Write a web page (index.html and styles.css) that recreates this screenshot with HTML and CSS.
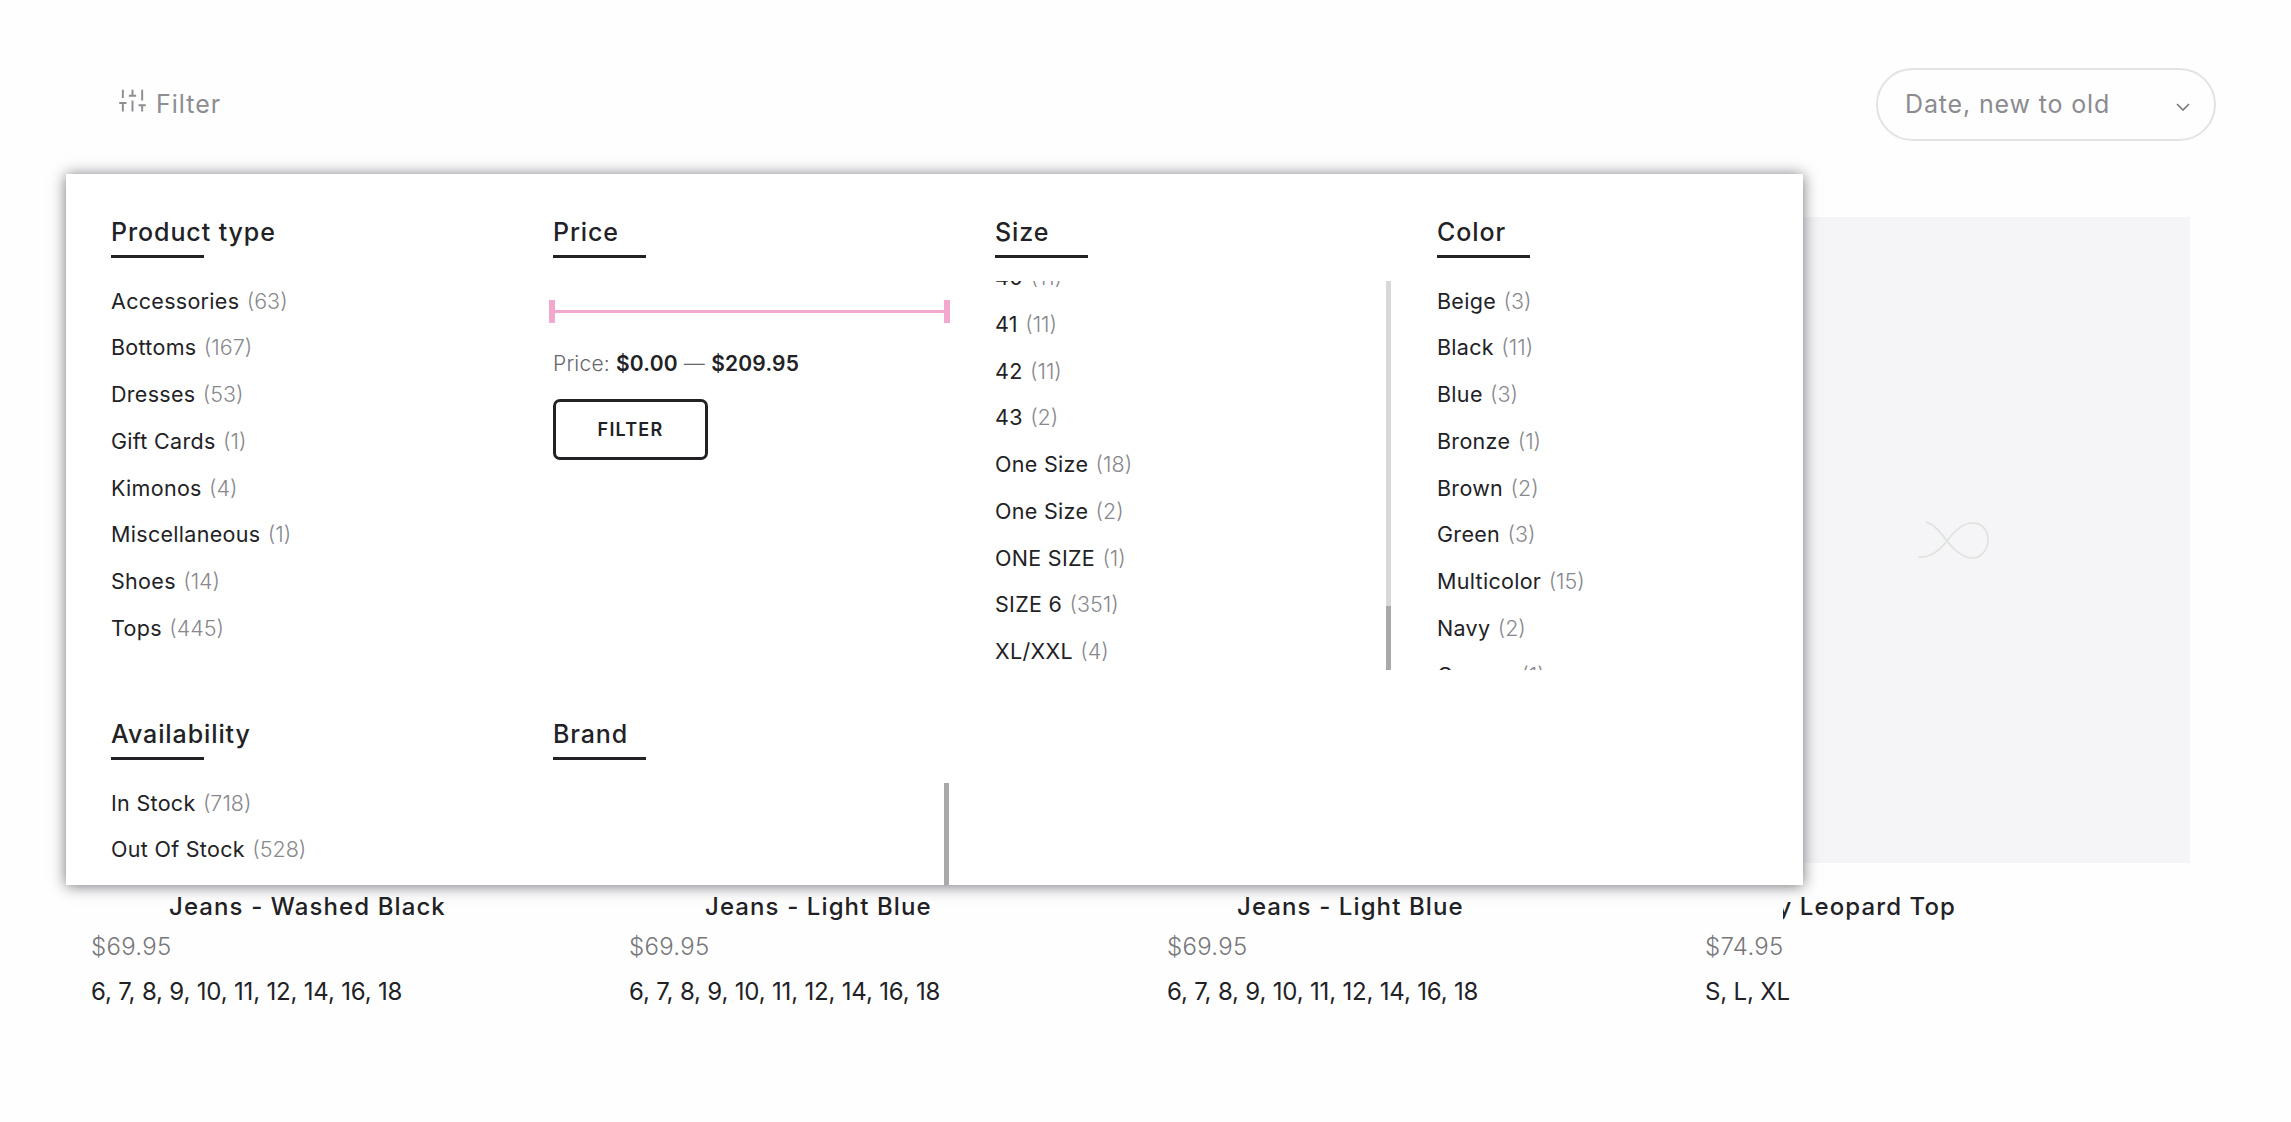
FILE: index.html
```html
<!DOCTYPE html>
<html lang="en">
<head>
    <meta charset="UTF-8">
    <meta name="viewport" content="width=device-width, initial-scale=1.0">
    <title>Collection</title>
    <link rel="stylesheet" href="styles.css">
</head>
<body>
    <div class="page">
        <div class="toolbar">
            <button class="filter-toggle">
                <svg class="filter-icon" viewBox="0 0 24 24" fill="none" stroke="currentColor" stroke-width="1.6">
                    <path d="M4 21v-7M4 10V3M12 21v-9M12 8V3M20 21v-5M20 12V3M1 14h6M9 8h6M17 16h6"/>
                </svg>
                Filter
            </button>
            <div class="sort-select">
                <span>Date, new to old</span>
                <svg class="sort-arrow" viewBox="0 0 14 8" fill="none" stroke="currentColor" stroke-width="1.6">
                    <path d="M1 1l6 6 6-6"/>
                </svg>
            </div>
        </div>

        <div class="product-grid">
            <div class="product-card">
                <div class="product-image">
                    <svg class="placeholder-icon" viewBox="0 0 72 38" fill="none" stroke="currentColor" stroke-width="1.6">
                        <path d="M1 36C12 37 20 32 30 20C38 9 46 2 55 2C66 2 71 10 71 19C71 29 64 37 55 37C46 37 38 30 30 20C24 12 18 4 9 1"/>
                    </svg>
                </div>
                <div class="product-title">Jeans - Washed Black</div>
                <div class="product-price">$69.95</div>
                <div class="product-sizes">6, 7, 8, 9, 10, 11, 12, 14, 16, 18</div>
            </div>
            <div class="product-card">
                <div class="product-image">
                    <svg class="placeholder-icon" viewBox="0 0 72 38" fill="none" stroke="currentColor" stroke-width="1.6">
                        <path d="M1 36C12 37 20 32 30 20C38 9 46 2 55 2C66 2 71 10 71 19C71 29 64 37 55 37C46 37 38 30 30 20C24 12 18 4 9 1"/>
                    </svg>
                </div>
                <div class="product-title">Jeans - Light Blue</div>
                <div class="product-price">$69.95</div>
                <div class="product-sizes">6, 7, 8, 9, 10, 11, 12, 14, 16, 18</div>
            </div>
            <div class="product-card">
                <div class="product-image">
                    <svg class="placeholder-icon" viewBox="0 0 72 38" fill="none" stroke="currentColor" stroke-width="1.6">
                        <path d="M1 36C12 37 20 32 30 20C38 9 46 2 55 2C66 2 71 10 71 19C71 29 64 37 55 37C46 37 38 30 30 20C24 12 18 4 9 1"/>
                    </svg>
                </div>
                <div class="product-title">Jeans - Light Blue</div>
                <div class="product-price">$69.95</div>
                <div class="product-sizes">6, 7, 8, 9, 10, 11, 12, 14, 16, 18</div>
            </div>
            <div class="product-card">
                <div class="product-image">
                    <svg class="placeholder-icon" viewBox="0 0 72 38" fill="none" stroke="currentColor" stroke-width="1.6">
                        <path d="M1 36C12 37 20 32 30 20C38 9 46 2 55 2C66 2 71 10 71 19C71 29 64 37 55 37C46 37 38 30 30 20C24 12 18 4 9 1"/>
                    </svg>
                </div>
                <div class="product-title"><span>y Leopard Top</span></div>
                <div class="product-price">$74.95</div>
                <div class="product-sizes">S, L, XL</div>
            </div>
        </div>

        <!-- Filter dropdown, lies over the grid -->
        <div class="filter-panel">
            <section class="filter-section">
                <h3 class="filter-heading">Product type</h3>
                <div class="filter-scroll">
                    <ul class="filter-list">
                        <li>Accessories <span class="count">(63)</span></li>
                        <li>Bottoms <span class="count">(167)</span></li>
                        <li>Dresses <span class="count">(53)</span></li>
                        <li>Gift Cards <span class="count">(1)</span></li>
                        <li>Kimonos <span class="count">(4)</span></li>
                        <li>Miscellaneous <span class="count">(1)</span></li>
                        <li>Shoes <span class="count">(14)</span></li>
                        <li>Tops <span class="count">(445)</span></li>
                    </ul>
                </div>
            </section>

            <section class="filter-section">
                <h3 class="filter-heading">Price</h3>
                <div class="price-slider">
                    <span class="slider-handle"></span>
                    <span class="slider-line"></span>
                    <span class="slider-handle"></span>
                </div>
                <div class="price-label">Price: <strong>$0.00</strong> — <strong>$209.95</strong></div>
                <button class="price-btn">FILTER</button>
            </section>

            <section class="filter-section">
                <h3 class="filter-heading">Size</h3>
                <div class="filter-scroll">
                    <ul class="filter-list filter-list-scrolled">
                        <li>40 <span class="count">(11)</span></li>
                        <li>41 <span class="count">(11)</span></li>
                        <li>42 <span class="count">(11)</span></li>
                        <li>43 <span class="count">(2)</span></li>
                        <li>One Size <span class="count">(18)</span></li>
                        <li>One Size <span class="count">(2)</span></li>
                        <li>ONE SIZE <span class="count">(1)</span></li>
                        <li>SIZE 6 <span class="count">(351)</span></li>
                        <li>XL/XXL <span class="count">(4)</span></li>
                    </ul>
                    <div class="scroll-track"><div class="scroll-thumb"></div></div>
                </div>
            </section>

            <section class="filter-section">
                <h3 class="filter-heading">Color</h3>
                <div class="filter-scroll">
                    <ul class="filter-list">
                        <li>Beige <span class="count">(3)</span></li>
                        <li>Black <span class="count">(11)</span></li>
                        <li>Blue <span class="count">(3)</span></li>
                        <li>Bronze <span class="count">(1)</span></li>
                        <li>Brown <span class="count">(2)</span></li>
                        <li>Green <span class="count">(3)</span></li>
                        <li>Multicolor <span class="count">(15)</span></li>
                        <li>Navy <span class="count">(2)</span></li>
                        <li>Orange <span class="count">(1)</span></li>
                    </ul>
                </div>
            </section>

            <section class="filter-section">
                <h3 class="filter-heading">Availability</h3>
                <div class="filter-scroll">
                    <ul class="filter-list">
                        <li>In Stock <span class="count">(718)</span></li>
                        <li>Out Of Stock <span class="count">(528)</span></li>
                    </ul>
                </div>
            </section>

            <section class="filter-section">
                <h3 class="filter-heading">Brand</h3>
                <div class="filter-scroll">
                    <div class="scroll-track scroll-track-full"></div>
                </div>
            </section>
        </div>
    </div>
</body>
</html>
```

FILE: styles.css
```css
* {
    margin: 0;
    padding: 0;
    box-sizing: border-box;
}

body {
    font-family: Inter, 'Open Sans', 'Liberation Sans', sans-serif;
    background: #fefefe;
    color: #222226;
}

.page {
    position: relative;
    padding: 68px 101px 0 91px;
}

.toolbar {
    display: flex;
    justify-content: space-between;
    align-items: center;
    margin: 0 -26px 0 27px;
}

.filter-toggle {
    display: flex;
    align-items: center;
    gap: 9px;
    padding-bottom: 1px;
    border: none;
    background: none;
    font-family: inherit;
    font-size: 25px;
    letter-spacing: 1px;
    color: #8d8d92;
}

.filter-icon {
    width: 29px;
    height: 29px;
    margin-top: -7px;
}

.sort-select {
    display: flex;
    justify-content: space-between;
    align-items: center;
    width: 340px;
    height: 73px;
    padding: 0 24px 2px 27px;
    border: 2px solid #e3e3e6;
    border-radius: 37px;
    font-size: 25px;
    letter-spacing: 0.85px;
    color: #8b8b90;
}

.sort-arrow {
    width: 14px;
    height: 8px;
    margin-top: 6px;
    color: #77777c;
}

.product-grid {
    display: grid;
    grid-template-columns: repeat(4, 485px);
    column-gap: 53px;
    margin-top: 76px;
}

.product-image {
    display: flex;
    justify-content: center;
    align-items: center;
    height: 646px;
    background: #f5f5f7;
}

.placeholder-icon {
    width: 72px;
    height: 38px;
    margin-left: 10px;
    color: #dde2dd;
}

.product-title {
    margin-top: 29px;
    font-size: 24px;
    line-height: 30px;
    font-weight: 500;
    letter-spacing: 1.1px;
    white-space: nowrap;
}

.product-card:nth-child(1) .product-title {
    padding-left: 78px;
}

.product-card:nth-child(2) .product-title {
    padding-left: 76px;
}

.product-card:nth-child(3) .product-title {
    padding-left: 70px;
}

/* title is cut on the left in this card */
.product-card:nth-child(4) .product-title {
    display: flex;
    justify-content: flex-end;
    width: 173px;
    margin-left: 78px;
    overflow: hidden;
}

.product-price {
    margin-top: 10px;
    font-size: 24px;
    line-height: 30px;
    font-weight: 300;
    letter-spacing: 0.3px;
    color: #77777c;
}

.product-sizes {
    margin-top: 15px;
    font-size: 24px;
    line-height: 30px;
    letter-spacing: -0.18px;
    white-space: nowrap;
}

.filter-panel {
    position: absolute;
    top: 174px;
    left: 66px;
    display: grid;
    grid-template-columns: repeat(4, 396px);
    column-gap: 46px;
    row-gap: 48px;
    align-content: start;
    width: 1737px;
    height: 711px;
    padding: 42px 0 0 45px;
    background: #fff;
    box-shadow: 0 1px 14px rgba(40, 40, 50, 0.65);
    overflow: hidden;
}

.filter-section {
    height: 454px;
}

.filter-heading {
    width: 93px;
    height: 42px;
    border-bottom: 3px solid #222226;
    font-size: 25px;
    line-height: 33px;
    font-weight: 500;
    letter-spacing: 0.9px;
    white-space: nowrap;
}

.filter-scroll {
    position: relative;
    height: 389px;
    margin-top: 23px;
    overflow: hidden;
}

.filter-list {
    list-style: none;
    margin-top: -3.5px;
}

.filter-list-scrolled {
    margin-top: -27px;
}

.filter-list li {
    height: 46.75px;
    font-size: 21.5px;
    line-height: 46.75px;
    letter-spacing: 0.3px;
    white-space: nowrap;
}

.count {
    margin-left: 1px;
    font-weight: 300;
    letter-spacing: 0;
    color: #88888d;
}

.scroll-track {
    position: absolute;
    top: 0;
    right: 0;
    width: 5px;
    height: 100%;
    background: #d8d8da;
}

.scroll-thumb {
    position: absolute;
    bottom: 0;
    left: 0;
    width: 100%;
    height: 64px;
    background: #a9a9a9;
}

.scroll-track-full {
    background: #a9a9a9;
}

.price-slider {
    display: flex;
    align-items: center;
    width: 401px;
    margin: 42px 0 0 -4px;
}

.slider-handle {
    width: 6px;
    height: 23px;
    background: #f2a9cd;
}

.slider-line {
    flex: 1;
    height: 3px;
    background: #f2a9cd;
}

.price-label {
    margin-top: 24px;
    font-size: 21px;
    line-height: 34px;
    font-weight: 300;
    letter-spacing: 0.2px;
    color: #66666b;
}

.price-label strong {
    font-weight: 600;
    color: #222226;
}

.price-btn {
    display: block;
    width: 155px;
    height: 61px;
    margin-top: 18px;
    border: 3px solid #222226;
    border-radius: 7px;
    background: #fff;
    font-family: inherit;
    font-size: 18px;
    font-weight: 600;
    letter-spacing: 1.2px;
    color: #222226;
}
```
